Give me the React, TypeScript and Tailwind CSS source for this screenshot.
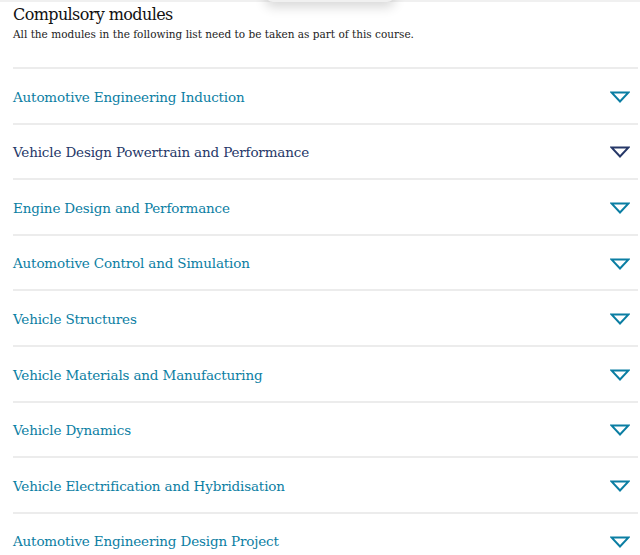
const modules = [
  { name: 'Automotive Engineering Induction', active: false },
  { name: 'Vehicle Design Powertrain and Performance', active: true },
  { name: 'Engine Design and Performance', active: false },
  { name: 'Automotive Control and Simulation', active: false },
  { name: 'Vehicle Structures', active: false },
  { name: 'Vehicle Materials and Manufacturing', active: false },
  { name: 'Vehicle Dynamics', active: false },
  { name: 'Vehicle Electrification and Hybridisation', active: false },
  { name: 'Automotive Engineering Design Project', active: false },
];

function Chevron({ color }: { color: string }) {
  return (
    <svg width="20" height="12" viewBox="0 0 20 12" fill="none">
      <path d="M1.5 1.5 H18.5 L10 10.5 Z" stroke={color} strokeWidth="2" strokeLinejoin="miter" />
    </svg>
  );
}

export default function App() {
  return (
    <div className="relative w-[640px] h-[555px] overflow-hidden bg-white font-['DejaVu_Serif',serif]">
      {/* header edge + shadow */}
      <div className="absolute top-0 left-0 right-0 h-[2px] bg-[#f0f0f0]" />
      <div className="absolute top-[-14px] left-[265px] w-[130px] h-[16px] rounded-full shadow-[0_5px_12px_rgba(0,0,0,0.16)]" />

      <div className="pl-[13px] pr-[2px]">
        <div className="pt-[4px] h-[67px]">
          <h2 className="text-[16px] leading-[22px] tracking-[-0.6px] text-[#111]">Compulsory modules</h2>
          <p className="text-[10.5px] leading-[16px] text-[#222]">
            All the modules in the following list need to be taken as part of this course.
          </p>
        </div>

        <ul>
          {modules.map((m) => (
            <li
              key={m.name}
              className="flex items-center justify-between h-[55.6px] border-t-2 border-[#ececec] pt-[2px] pr-[8px]"
            >
              <span
                className={
                  m.active
                    ? 'text-[13.5px] tracking-[-0.16px] text-[#263868]'
                    : 'text-[13.5px] tracking-[-0.16px] text-[#0b7ea3]'
                }
              >
                {m.name}
              </span>
              <Chevron color={m.active ? '#263868' : '#0b7ea3'} />
            </li>
          ))}
        </ul>
      </div>
    </div>
  );
}
